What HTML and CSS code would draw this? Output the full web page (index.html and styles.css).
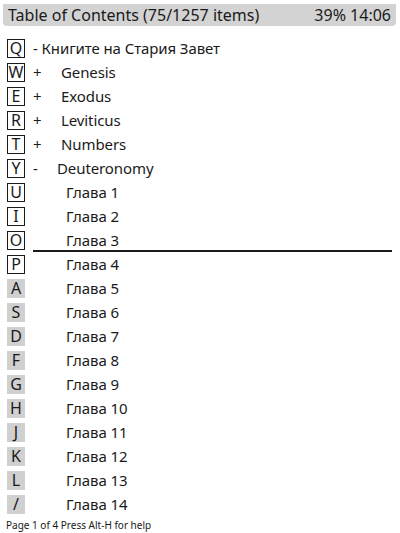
FILE: index.html
```html
<!DOCTYPE html>
<html lang="bg">
<head>
  <meta charset="UTF-8" />
  <meta name="viewport" content="width=device-width, initial-scale=1.0" />
  <title>Table of Contents</title>
  <link rel="stylesheet" href="styles.css">
</head>
<body>

  <div class="toc-header">
    <span class="toc-header__title">Table of Contents (75/1257 items)</span>
    <span class="toc-header__status">39% 14:06</span>
  </div>

  <ul class="toc-list">
    <li class="toc-item"><span class="toc-key">Q</span><span class="toc-label">- Книгите на Стария Завет</span></li>
    <li class="toc-item"><span class="toc-key">W</span><span class="toc-label"><span class="toc-sign">+</span>Genesis</span></li>
    <li class="toc-item"><span class="toc-key">E</span><span class="toc-label"><span class="toc-sign">+</span>Exodus</span></li>
    <li class="toc-item"><span class="toc-key">R</span><span class="toc-label"><span class="toc-sign">+</span>Leviticus</span></li>
    <li class="toc-item"><span class="toc-key">T</span><span class="toc-label"><span class="toc-sign">+</span>Numbers</span></li>
    <li class="toc-item"><span class="toc-key">Y</span><span class="toc-label"><span class="toc-sign toc-sign--open">-</span>Deuteronomy</span></li>
    <li class="toc-item"><span class="toc-key">U</span><span class="toc-label toc-label--chapter">Глава 1</span></li>
    <li class="toc-item"><span class="toc-key">I</span><span class="toc-label toc-label--chapter">Глава 2</span></li>
    <li class="toc-item"><span class="toc-key">O</span><span class="toc-label toc-label--chapter toc-label--current">Глава 3</span></li>
    <li class="toc-item"><span class="toc-key">P</span><span class="toc-label toc-label--chapter">Глава 4</span></li>
    <li class="toc-item"><span class="toc-key toc-key--alt">A</span><span class="toc-label toc-label--chapter">Глава 5</span></li>
    <li class="toc-item"><span class="toc-key toc-key--alt">S</span><span class="toc-label toc-label--chapter">Глава 6</span></li>
    <li class="toc-item"><span class="toc-key toc-key--alt">D</span><span class="toc-label toc-label--chapter">Глава 7</span></li>
    <li class="toc-item"><span class="toc-key toc-key--alt">F</span><span class="toc-label toc-label--chapter">Глава 8</span></li>
    <li class="toc-item"><span class="toc-key toc-key--alt">G</span><span class="toc-label toc-label--chapter">Глава 9</span></li>
    <li class="toc-item"><span class="toc-key toc-key--alt">H</span><span class="toc-label toc-label--chapter">Глава 10</span></li>
    <li class="toc-item"><span class="toc-key toc-key--alt">J</span><span class="toc-label toc-label--chapter">Глава 11</span></li>
    <li class="toc-item"><span class="toc-key toc-key--alt">K</span><span class="toc-label toc-label--chapter">Глава 12</span></li>
    <li class="toc-item"><span class="toc-key toc-key--alt">L</span><span class="toc-label toc-label--chapter">Глава 13</span></li>
    <li class="toc-item"><span class="toc-key toc-key--alt">/</span><span class="toc-label toc-label--chapter">Глава 14</span></li>
  </ul>

  <div class="toc-footer">Page 1 of 4 Press Alt-H for help</div>

</body>
</html>
```

FILE: styles.css
```css
/* Reader table of contents */
:root {
  --toc-text: #1a1a1a;
  --toc-bar: #d3d3d3;
  --toc-key-bg: #d0d0d0;
  --toc-bg: #fff;
}

body {
  margin: 0;
  padding: 4px 4px 0 3px;
  font-family: 'Noto Sans', 'Open Sans', sans-serif;
  font-size: 15px;
  color: var(--toc-text);
  background: var(--toc-bg);
}

/* Top status bar */
.toc-header {
  display: flex;
  justify-content: space-between;
  align-items: center;
  height: 22px;
  padding: 0 5px;
  background: var(--toc-bar);
  border-radius: 0 0 4px 4px;
  font-size: 16px;
}

/* List of entries */
.toc-list {
  list-style: none;
  margin: 10px 0 0;
  padding: 0;
}

.toc-item {
  display: flex;
  align-items: center;
  height: 24px;
}

/* Shortcut key box */
.toc-key {
  display: flex;
  justify-content: center;
  align-items: center;
  box-sizing: border-box;
  width: 18px;
  height: 19px;
  margin: 0 8px 0 4px;
  border: 1.5px solid var(--toc-text);
  font-size: 16px;
  line-height: 1;
  flex-shrink: 0;
}

.toc-key--alt {
  border-color: var(--toc-key-bg);
  background: var(--toc-key-bg);
}

.toc-label {
  display: flex;
  align-items: center;
  box-sizing: border-box;
  height: 24px;
  flex: 1;
  margin-right: 4px;
  letter-spacing: -0.1px;
}

.toc-sign {
  width: 28px;
  flex-shrink: 0;
}

.toc-sign--open {
  width: 24px;
}

.toc-label--chapter {
  padding-left: 33px;
}

/* Current position marker */
.toc-label--current {
  border-bottom: 2px solid var(--toc-text);
  padding-top: 2px;
}

.toc-footer {
  margin-top: 2px;
  padding-left: 3px;
  font-size: 10px;
  line-height: 14px;
}
```
